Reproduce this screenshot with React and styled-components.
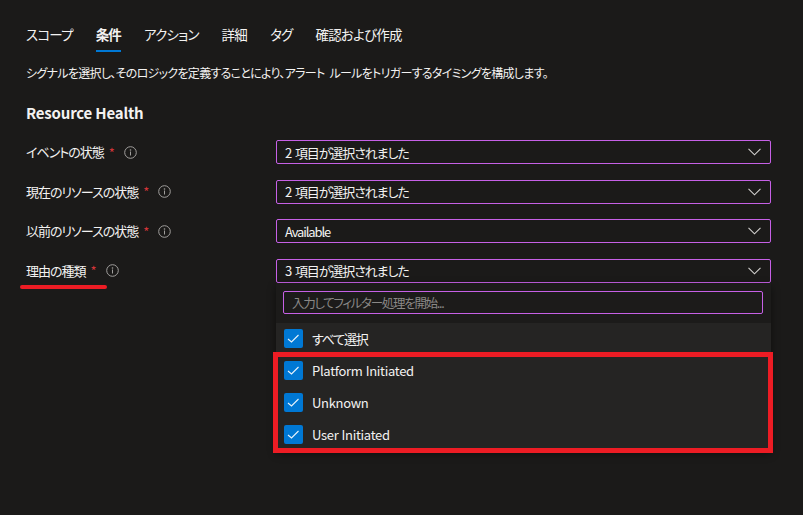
import styled, { createGlobalStyle } from 'styled-components';

const GlobalStyle = createGlobalStyle`
  body {
    margin: 0;
    background-color: #1b1a19;
    color: #f3f2f1;
    font-family: 'Noto Sans CJK JP', 'Noto Sans', sans-serif;
    font-feature-settings: 'palt';
  }
`;

const Page = styled.div`
  min-height: 515px;
  padding: 24px 0 0 26px;
  box-sizing: border-box;
`;

const TabBar = styled.nav`
  display: flex;
  gap: 23px;
`;

const Tab = styled.div`
  font-size: 13.5px;
  letter-spacing: -0.8px;
  line-height: 20px;
  padding-bottom: 6px;
  color: #f3f2f1;
  font-weight: ${(p) => (p.active ? 700 : 400)};
  border-bottom: 2px solid ${(p) => (p.active ? '#0078d4' : 'transparent')};
`;

const Description = styled.p`
  margin: 12px 0 0;
  font-size: 12px;
  letter-spacing: -0.7px;
  word-spacing: 3px;
  line-height: 18px;
`;

const SectionTitle = styled.h2`
  margin: 21px 0 0;
  font-size: 15px;
  letter-spacing: -0.2px;
  line-height: 20px;
  font-weight: 700;
`;

const Form = styled.div`
  margin-top: 17px;
  display: flex;
  flex-direction: column;
  gap: 15.5px;
`;

const Row = styled.div`
  display: flex;
  align-items: flex-start;
`;

const LabelCell = styled.div`
  width: 250px;
  height: 24px;
  display: flex;
  align-items: center;
`;

const LabelText = styled.span`
  position: relative;
  font-size: 13px;
  letter-spacing: -1px;
  line-height: 24px;

  ${(p) =>
    p.marked &&
    `
    &::after {
      content: '';
      position: absolute;
      left: -6px;
      top: 26px;
      width: 87px;
      height: 4px;
      border-radius: 2px;
      background-color: #ed1c24;
    }
  `}
`;

const Required = styled.span`
  color: #d13438;
  font-size: 13px;
  margin-left: 5px;
`;

const InfoIcon = styled.svg`
  width: 13px;
  height: 13px;
  margin-left: 9px;
`;

const FieldCol = styled.div`
  width: 495px;
  display: flex;
  flex-direction: column;
`;

const Select = styled.div`
  height: 24px;
  box-sizing: border-box;
  border: 1px solid #c660e6;
  border-radius: 2px;
  background-color: #1b1a19;
  display: flex;
  align-items: center;
  justify-content: space-between;
  padding: 0 9px 0 8px;
  font-size: 13px;
  letter-spacing: -1.1px;
  word-spacing: 2px;
`;

const Chevron = styled.svg`
  width: 13px;
  height: 8px;
`;

const Panel = styled.div`
  box-shadow: 0 3px 8px rgba(0, 0, 0, 0.45);
`;

const FilterArea = styled.div`
  padding: 8px 8px 9px 7px;
  background-color: #1c1b1a;
`;

const FilterInput = styled.div`
  height: 23px;
  box-sizing: border-box;
  border: 1px solid #c660e6;
  border-radius: 2px;
  padding-left: 8px;
  display: flex;
  align-items: center;
  font-size: 12.5px;
  letter-spacing: -1.3px;
  color: #8a8886;
`;

const OptionList = styled.div`
  background-color: #252423;
`;

const Highlight = styled.div`
  position: relative;

  &::after {
    content: '';
    position: absolute;
    left: -3px;
    right: -2px;
    top: -3px;
    bottom: -2px;
    border: 5px solid #ed1c24;
    pointer-events: none;
  }
`;

const Option = styled.div`
  height: 32px;
  display: flex;
  align-items: center;
  padding-left: 8px;
  gap: 9px;
  font-size: 13px;
  letter-spacing: ${(p) => (p.jp ? '-1.2px' : '-0.3px')};
  word-spacing: 0.5px;
`;

const Box = styled.span`
  width: 19px;
  height: 19px;
  border-radius: 2px;
  background-color: #0078d4;
  display: flex;
  align-items: center;
  justify-content: center;
`;

const Info = () => (
  <InfoIcon viewBox="0 0 13 13">
    <circle cx="6.5" cy="6.5" r="5.8" fill="none" stroke="#a19f9d" strokeWidth="1" />
    <circle cx="6.5" cy="4" r="0.8" fill="#a19f9d" />
    <rect x="6" y="5.5" width="1" height="4" fill="#a19f9d" />
  </InfoIcon>
);

const Check = () => (
  <Box>
    <svg width="19" height="19" viewBox="0 0 19 19">
      <polyline points="4,10 7.5,13 14.5,6" fill="none" stroke="#e8f3fc" strokeWidth="1.1" />
    </svg>
  </Box>
);

const Field = ({ label, value, marked, children }) => (
  <Row>
    <LabelCell>
      <LabelText marked={marked}>{label}</LabelText>
      <Required>*</Required>
      <Info />
    </LabelCell>
    <FieldCol>
      <Select>
        <span>{value}</span>
        <Chevron viewBox="0 0 13 8">
          <polyline points="0.5,0.8 6.5,6.8 12.5,0.8" fill="none" stroke="#d2d0ce" strokeWidth="1.1" />
        </Chevron>
      </Select>
      {children}
    </FieldCol>
  </Row>
);

const tabs = ['スコープ', '条件', 'アクション', '詳細', 'タグ', '確認および作成'];
const reasons = ['Platform Initiated', 'Unknown', 'User Initiated'];

const App = () => {
  return (
    <Page>
      <GlobalStyle />
      <TabBar>
        {tabs.map((t) => (
          <Tab key={t} active={t === '条件'}>
            {t}
          </Tab>
        ))}
      </TabBar>
      <Description>
        シグナルを選択し、そのロジックを定義することにより、アラート ルールをトリガーするタイミングを構成します。
      </Description>
      <SectionTitle>Resource Health</SectionTitle>
      <Form>
        <Field label="イベントの状態" value="2 項目が選択されました" />
        <Field label="現在のリソースの状態" value="2 項目が選択されました" />
        <Field label="以前のリソースの状態" value="Available" />
        <Field label="理由の種類" value="3 項目が選択されました" marked>
          <Panel>
            <FilterArea>
              <FilterInput>入力してフィルター処理を開始...</FilterInput>
            </FilterArea>
            <OptionList>
              <Option jp>
                <Check />
                すべて選択
              </Option>
              <Highlight>
                {reasons.map((r) => (
                  <Option key={r}>
                    <Check />
                    {r}
                  </Option>
                ))}
              </Highlight>
            </OptionList>
          </Panel>
        </Field>
      </Form>
    </Page>
  );
};

export default App;
